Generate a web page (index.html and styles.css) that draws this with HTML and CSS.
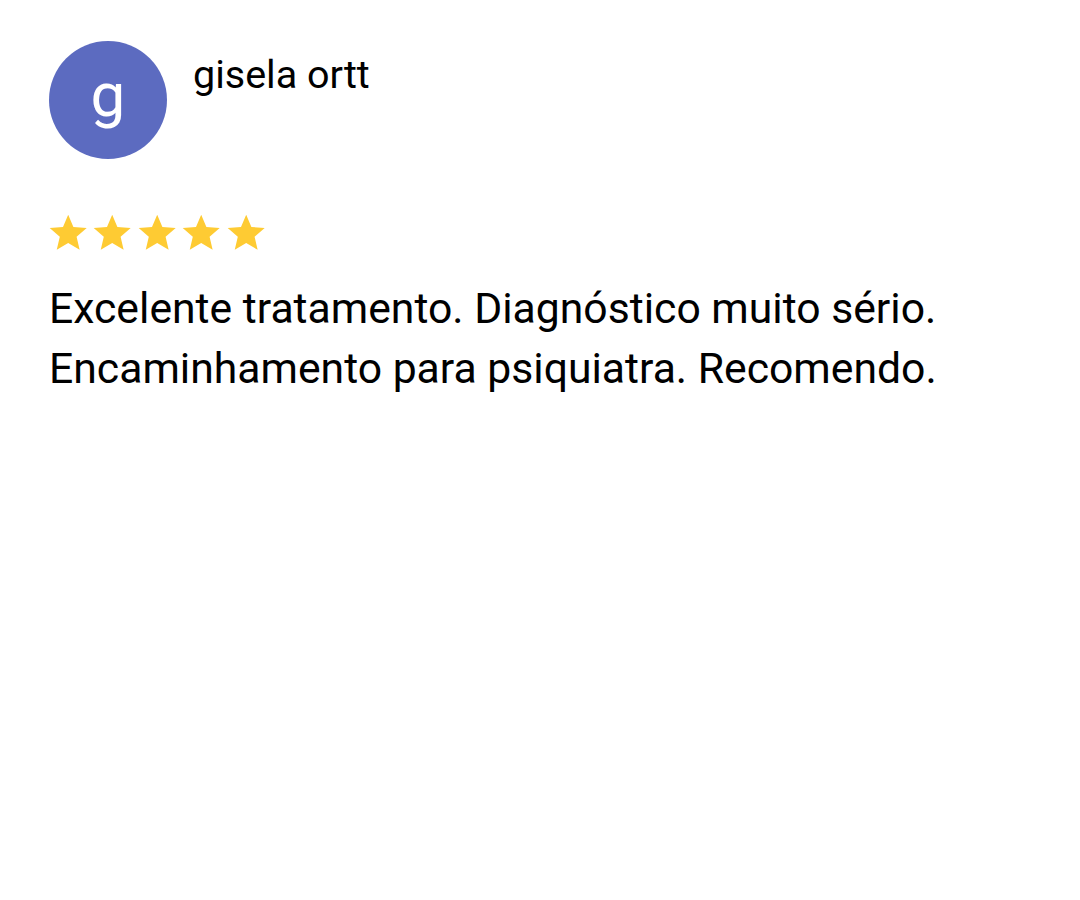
FILE: index.html
```html
<!DOCTYPE html>
<html lang="pt">
<head>
<meta charset="utf-8">
<link rel="stylesheet" href="styles.css">
</head>
<body>
<div class="review">
  <div class="header">
    <div class="avatar">g</div>
    <div class="name">gisela ortt</div>
  </div>
  <div class="stars">
    <svg class="star" viewBox="0 0 24 24"><path d="M12 17.27L18.18 21l-1.64-7.03L22 9.24l-7.19-.61L12 2 9.19 8.63 2 9.24l5.46 4.73L5.82 21z"/></svg>
    <svg class="star" viewBox="0 0 24 24"><path d="M12 17.27L18.18 21l-1.64-7.03L22 9.24l-7.19-.61L12 2 9.19 8.63 2 9.24l5.46 4.73L5.82 21z"/></svg>
    <svg class="star" viewBox="0 0 24 24"><path d="M12 17.27L18.18 21l-1.64-7.03L22 9.24l-7.19-.61L12 2 9.19 8.63 2 9.24l5.46 4.73L5.82 21z"/></svg>
    <svg class="star" viewBox="0 0 24 24"><path d="M12 17.27L18.18 21l-1.64-7.03L22 9.24l-7.19-.61L12 2 9.19 8.63 2 9.24l5.46 4.73L5.82 21z"/></svg>
    <svg class="star" viewBox="0 0 24 24"><path d="M12 17.27L18.18 21l-1.64-7.03L22 9.24l-7.19-.61L12 2 9.19 8.63 2 9.24l5.46 4.73L5.82 21z"/></svg>
  </div>
  <p class="text">Excelente tratamento. Diagnóstico muito sério. Encaminhamento para psiquiatra. Recomendo.</p>
</div>
</body>
</html>
```
FILE: styles.css
```css
html, body {
  margin: 0;
  padding: 0;
  background: #ffffff;
}
body {
  font-family: Roboto, "Noto Sans", sans-serif;
  color: #000000;
}
.review {
  padding: 41px 0 0 49px;
  width: 940px;
}
.header {
  display: flex;
  align-items: flex-start;
  gap: 26px;
}
.avatar {
  width: 118px;
  height: 118px;
  border-radius: 50%;
  background: #5c6bc0;
  color: #ffffff;
  font-size: 62px;
  line-height: 108px;
  text-align: center;
  flex: none;
}
.name {
  font-size: 39.5px;
  margin-top: 10px;
}
.stars {
  display: flex;
  margin: 52px 0 0 -3px;
}
.star {
  width: 44.4px;
  height: 44.4px;
  fill: #fecb33;
  display: block;
}
.text {
  margin: 23px 0 0 0;
  font-size: 42.7px;
  line-height: 60px;
}
```
